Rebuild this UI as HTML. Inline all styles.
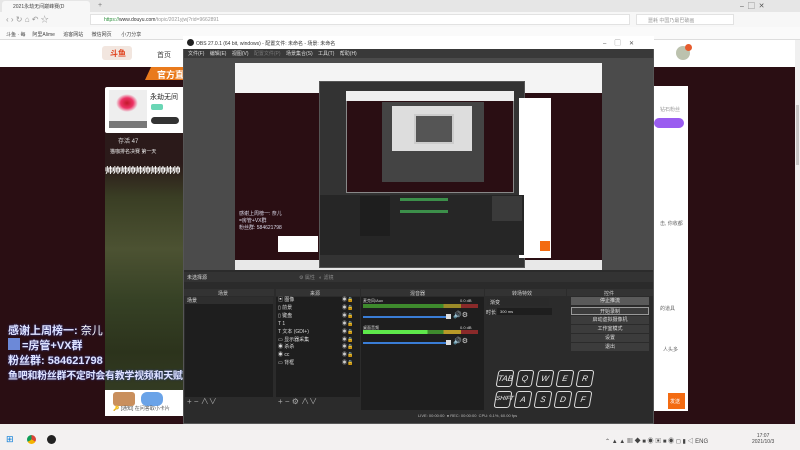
<!DOCTYPE html>
<html><head><meta charset="utf-8"><style>
*{margin:0;padding:0;box-sizing:border-box}
body{width:800px;height:450px;overflow:hidden;position:relative;background:#2a0e13;font-family:"Liberation Sans","Noto Sans CJK SC",sans-serif;font-size:5px;color:#333}
.a{position:absolute}
.t{white-space:nowrap}
.btn{position:absolute;left:4px;right:4px;height:8px;background:#3c3c3c;color:#ddd;text-align:center;font-size:5px;line-height:8px}
.k{position:absolute;width:16px;height:17px;border:1.5px solid #ddd;border-radius:3px;background:rgba(40,40,40,.8);color:#eee;font-size:8px;font-style:italic;text-align:center;line-height:15px;transform:skewX(-10deg)}
</style></head><body>
<div class="a" style="left:0;top:0;width:800px;height:12px;background:#e6e6e6"></div>
<div class="a" style="left:2px;top:1px;width:88px;height:11px;background:#f7f7f7;border-radius:3px 3px 0 0"></div>
<div class="a t" style="left:13px;top:3px;font-size:5px;color:#444">2021永劫无间巅峰赛(D</div>
<div class="a t" style="left:98px;top:2px;font-size:7px;color:#777">+</div>
<div class="a t" style="left:740px;top:1px;font-size:7px;color:#555">–&nbsp;&nbsp;▢&nbsp;&nbsp;✕</div>
<div class="a" style="left:0;top:12px;width:800px;height:15px;background:#f7f7f7"></div>
<div class="a t" style="left:6px;top:14px;font-size:8px;color:#999">‹ › ↻ ⌂ ↶ ☆</div>
<div class="a" style="left:90px;top:14px;width:540px;height:11px;background:#fff;border:1px solid #e2e2e2"></div>
<div class="a t" style="left:104px;top:17px;font-size:5px;color:#2b8f3b">https://<span style="color:#333">www.douyu.com</span><span style="color:#999">/topic/2021yjwj?rid=9662891</span></div>
<div class="a" style="left:636px;top:14px;width:98px;height:11px;background:#fff;border:1px solid #e2e2e2"></div>
<div class="a t" style="left:648px;top:17px;font-size:5px;color:#999">噩耗 中国乃最巴破画</div>
<div class="a" style="left:0;top:27px;width:800px;height:13px;background:#fafafa;border-bottom:1px solid #ddd"></div>
<div class="a t" style="left:6px;top:31px;font-size:5px;color:#444">斗鱼 · 每&nbsp;&nbsp;&nbsp;&nbsp;&nbsp;阿里Alime&nbsp;&nbsp;&nbsp;&nbsp;&nbsp;&nbsp;追客网站&nbsp;&nbsp;&nbsp;&nbsp;&nbsp;&nbsp;微信网页&nbsp;&nbsp;&nbsp;&nbsp;&nbsp;&nbsp;&nbsp;小刀分享</div>
<div class="a" style="left:0;top:40px;width:800px;height:27px;background:#fff"></div>
<div class="a" style="left:102px;top:46px;width:30px;height:14px;background:#f2e6df;border-radius:3px"></div>
<div class="a t" style="left:110px;top:48px;font-size:8px;color:#e0401a;font-weight:bold">斗鱼</div>
<div class="a t" style="left:157px;top:50px;font-size:7px;color:#444">首页</div>
<div class="a" style="left:676px;top:46px;width:14px;height:14px;border-radius:50%;background:#bcc2ae"></div>
<div class="a" style="left:685px;top:44px;width:7px;height:7px;border-radius:50%;background:#e65b2d"></div>
<div class="a" style="left:795px;top:40px;width:5px;height:390px;background:#f0f0f0"></div>
<div class="a" style="left:796px;top:105px;width:3px;height:60px;background:#c8c8c8"></div>
<div class="a" style="left:145px;top:67px;width:40px;height:13px;background:#e97a1c;clip-path:polygon(15% 0,100% 0,100% 100%,0 100%)"></div>
<div class="a t" style="left:157px;top:68px;font-size:9px;color:#fff;font-weight:bold">官方直</div>
<div class="a" style="left:105px;top:87px;width:80px;height:46px;background:#fff;border-radius:2px"></div>
<div class="a" style="left:109px;top:90px;width:38px;height:38px;background:#eee"></div>
<div class="a" style="left:116px;top:94px;width:22px;height:18px;border-radius:50%;background:radial-gradient(#c2182a,#e36 40%,#eee 70%)"></div>
<div class="a" style="left:109px;top:121px;width:38px;height:7px;background:#777"></div>
<div class="a t" style="left:150px;top:92px;font-size:7px;color:#222">永劫无间</div>
<div class="a" style="left:151px;top:104px;width:12px;height:6px;background:#6ad6b5;border-radius:2px"></div>
<div class="a" style="left:151px;top:117px;width:28px;height:7px;background:#333;border-radius:4px"></div>
<div class="a" style="left:105px;top:133px;width:80px;height:258px;background:linear-gradient(#2b1a1a 0,#2b1a1a 12%,#3a3e24 25%,#4c5232 45%,#364125 65%,#2c331c 85%,#333b22)"></div>
<div class="a t" style="left:118px;top:136px;font-size:6px;color:#ddd">存活 47</div>
<div class="a t" style="left:110px;top:148px;font-size:5px;color:#eee">猫咖排名决赛 第一天</div>
<div class="a" style="left:105px;top:165px;width:78px;height:10px;overflow:hidden"><div class="t" style="font-size:8px;color:#fff;font-weight:bold;letter-spacing:-0.5px">帅帅帅帅帅帅帅帅帅帅</div></div>
<div class="a" style="left:105px;top:390px;width:80px;height:26px;background:#fff"></div>
<div class="a" style="left:113px;top:392px;width:22px;height:14px;background:#c98f5d;border-radius:3px"></div>
<div class="a" style="left:141px;top:392px;width:22px;height:14px;background:#6aa3e8;border-radius:6px"></div>
<div class="a t" style="left:113px;top:405px;font-size:5px;color:#555">🔑 [通知] 在问答取小卡片</div>
<div class="a t" style="left:8px;top:322px;font-size:11px;color:#dfe3ff;font-weight:bold;text-shadow:0 0 2px #3040a0">感谢上周榜一: <span style="color:#fff;font-weight:normal">奈儿</span></div>
<div class="a" style="left:8px;top:338px;width:12px;height:12px;background:#6c89d8"></div>
<div class="a t" style="left:22px;top:337px;font-size:11px;color:#dfe3ff;font-weight:bold;text-shadow:0 0 2px #3040a0">=房管+VX群</div>
<div class="a t" style="left:8px;top:352px;font-size:11px;color:#dfe3ff;font-weight:bold;text-shadow:0 0 2px #3040a0">粉丝群: 584621798</div>
<div class="a t" style="left:8px;top:367px;font-size:10px;color:#dfe3ff;font-weight:bold;letter-spacing:-0.3px;text-shadow:0 0 2px #3040a0">鱼吧和粉丝群不定时会有教学视频和天赋</div>
<div class="a" style="left:654px;top:86px;width:34px;height:325px;background:#fff"></div>
<div class="a" style="left:654px;top:118px;width:30px;height:10px;background:#9a5cf0;border-radius:5px"></div>
<div class="a t" style="left:660px;top:106px;font-size:5px;color:#999">钻石粉丝</div>
<div class="a t" style="left:660px;top:220px;font-size:5px;color:#666">击, 你收都</div>
<div class="a t" style="left:660px;top:305px;font-size:5px;color:#666">的道具</div>
<div class="a t" style="left:663px;top:346px;font-size:5px;color:#666">人头多</div>
<div class="a" style="left:668px;top:393px;width:17px;height:16px;background:#f36b12"></div>
<div class="a t" style="left:670px;top:398px;font-size:5px;color:#fff">发送</div>
<div class="a" style="left:183px;top:36px;width:471px;height:388px;background:#2b2b2b;border:1px solid #555"></div>
<div class="a" style="left:183px;top:36px;width:471px;height:13px;background:#fff"></div>
<div class="a" style="left:187px;top:39px;width:7px;height:7px;border-radius:50%;background:#222"></div>
<div class="a t" style="left:196px;top:40px;font-size:5px;color:#333">OBS 27.0.1 (64 bit, windows) - 配置文件: 未命名 - 场景: 未命名</div>
<div class="a t" style="left:603px;top:38px;font-size:6px;color:#555">–&nbsp;&nbsp;&nbsp;&nbsp;&nbsp;▢&nbsp;&nbsp;&nbsp;&nbsp;&nbsp;✕</div>
<div class="a" style="left:184px;top:49px;width:469px;height:9px;background:#393939"></div>
<div class="a t" style="left:188px;top:50px;font-size:5px;color:#ddd;word-spacing:4px">文件(F) 编辑(E) 视图(V) <span style="color:#777">配置文件(P)</span> 场景集合(S) 工具(T) 帮助(H)</div>
<div class="a" style="left:184px;top:58px;width:469px;height:212px;background:#4b4b4b"></div>
<div class="a" style="left:235px;top:63px;width:367px;height:207px;background:#2a0e13"></div>
<div class="a" style="left:235px;top:63px;width:367px;height:30px;background:#f4f4f4"></div>
<div class="a" style="left:235px;top:260px;width:367px;height:10px;background:#e8e8e8"></div>
<div class="a" style="left:338px;top:82px;width:15px;height:5px;background:#e97a1c"></div>
<div class="a" style="left:338px;top:102px;width:40px;height:22px;background:#fff"></div>
<div class="a" style="left:338px;top:124px;width:40px;height:114px;background:linear-gradient(#3d3a22,#4a5030,#2e3620)"></div>
<div class="a t" style="left:239px;top:210px;font-size:5px;color:#dde">感谢上周榜一: 奈儿<br>=房管+VX群<br>粉丝群: 584621798</div>
<div class="a" style="left:278px;top:236px;width:40px;height:16px;background:#fff"></div>
<div class="a" style="left:319px;top:81px;width:206px;height:187px;background:#333;border:1px solid #555"></div>
<div class="a" style="left:519px;top:98px;width:32px;height:160px;background:#fff"></div>
<div class="a" style="left:540px;top:241px;width:10px;height:10px;background:#f36b12"></div>
<div class="a" style="left:346px;top:91px;width:168px;height:102px;background:#2a0e13;border:1px solid #888"></div>
<div class="a" style="left:346px;top:91px;width:168px;height:10px;background:#eee"></div>
<div class="a" style="left:382px;top:102px;width:102px;height:80px;background:#444"></div>
<div class="a" style="left:392px;top:106px;width:80px;height:45px;background:#ddd"></div>
<div class="a" style="left:414px;top:114px;width:40px;height:30px;background:#555;border:2px solid #ccc"></div>
<div class="a" style="left:320px;top:195px;width:204px;height:60px;background:#262626"></div>
<div class="a" style="left:360px;top:196px;width:30px;height:40px;background:#1e1e1e"></div>
<div class="a" style="left:400px;top:198px;width:48px;height:3px;background:#3c8f4a"></div>
<div class="a" style="left:400px;top:210px;width:48px;height:3px;background:#3c8f4a"></div>
<div class="a" style="left:492px;top:196px;width:30px;height:25px;background:#3a3a3a"></div>
<div class="a" style="left:184px;top:272px;width:469px;height:10px;background:#333"></div>
<div class="a t" style="left:187px;top:274px;font-size:5px;color:#ddd">未选择源</div>
<div class="a t" style="left:299px;top:274px;font-size:5px;color:#888">⚙ 属性&nbsp;&nbsp;&nbsp;◐ 滤镜</div>
<div class="a" style="left:184px;top:289px;width:90px;height:7px;background:#333"></div>
<div class="a t" style="left:218px;top:290px;font-size:5px;color:#ccc">场景</div>
<div class="a" style="left:185px;top:297px;width:88px;height:7px;background:#2e2e2e"></div>
<div class="a t" style="left:187px;top:297px;font-size:5px;color:#ddd">场景</div>
<div class="a" style="left:185px;top:304px;width:88px;height:93px;background:#1e1e1e"></div>
<div class="a t" style="left:187px;top:396px;font-size:8px;color:#aaa">+ − ∧∨</div>
<div class="a" style="left:276px;top:289px;width:84px;height:7px;background:#333"></div>
<div class="a t" style="left:310px;top:290px;font-size:5px;color:#ccc">来源</div>
<div class="a" style="left:276px;top:297px;width:84px;height:100px;background:#1e1e1e"></div>
<div class="a t" style="left:278px;top:297px;font-size:5px;line-height:7.9px;color:#ddd">▣ 图像<br>▯ 前景<br>▯ 键盘<br>T 1<br>T 文本 (GDI+)<br>▭ 显示器采集<br>◉ 杀杀<br>◉ cc<br>▭ 背框</div>
<div class="a t" style="left:342px;top:297px;font-size:5px;line-height:7.9px;color:#ccc">◉🔒<br>◉🔒<br>◉🔒<br>◉🔒<br>◉🔒<br>◉🔒<br>◉🔒<br>◉🔒<br>◉🔒</div>
<div class="a t" style="left:278px;top:396px;font-size:8px;color:#aaa">+ − ⚙ ∧∨</div>
<div class="a" style="left:361px;top:289px;width:123px;height:7px;background:#333"></div>
<div class="a t" style="left:410px;top:290px;font-size:5px;color:#ccc">混音器</div>
<div class="a" style="left:361px;top:297px;width:123px;height:121px;background:#1e1e1e"></div>
<div class="a t" style="left:363px;top:298px;font-size:4px;color:#ddd">麦克风/Aux</div>
<div class="a t" style="left:460px;top:298px;font-size:4px;color:#ddd">0.0 dB</div>
<div class="a" style="left:363px;top:304px;width:115px;height:4px;background:linear-gradient(90deg,#3e8a2d 0 70%,#9a8a28 70% 85%,#8a2a2a 85%)"></div>
<div class="a" style="left:363px;top:316px;width:85px;height:2px;background:#3a7dd6"></div>
<div class="a" style="left:446px;top:314px;width:5px;height:5px;background:#ddd"></div>
<div class="a t" style="left:453px;top:311px;font-size:7px;color:#ddd">🔊⚙</div>
<div class="a t" style="left:363px;top:325px;font-size:4px;color:#ddd">桌面音频</div>
<div class="a t" style="left:460px;top:325px;font-size:4px;color:#ddd">0.0 dB</div>
<div class="a" style="left:363px;top:330px;width:115px;height:4px;background:linear-gradient(90deg,#5ee84b 0 56%,#3e8a2d 56% 70%,#b89a28 70% 85%,#8a2a2a 85%)"></div>
<div class="a" style="left:363px;top:342px;width:85px;height:2px;background:#3a7dd6"></div>
<div class="a" style="left:446px;top:340px;width:5px;height:5px;background:#ddd"></div>
<div class="a t" style="left:453px;top:337px;font-size:7px;color:#ddd">🔊⚙</div>
<div class="a" style="left:485px;top:289px;width:81px;height:7px;background:#333"></div>
<div class="a t" style="left:512px;top:290px;font-size:5px;color:#ccc">转场特效</div>
<div class="a" style="left:487px;top:298px;width:62px;height:8px;background:#2a2a2a"></div>
<div class="a t" style="left:490px;top:299px;font-size:5px;color:#ddd">渐变</div>
<div class="a t" style="left:486px;top:309px;font-size:5px;color:#ddd">时长</div>
<div class="a" style="left:497px;top:308px;width:55px;height:7px;background:#1e1e1e"></div>
<div class="a t" style="left:500px;top:309px;font-size:4px;color:#ddd">300 ms</div>
<div class="a" style="left:567px;top:289px;width:86px;height:7px;background:#333"></div>
<div class="a t" style="left:604px;top:290px;font-size:5px;color:#ccc">控件</div>
<div class="a" style="left:567px;top:297px;width:86px;height:60px">
<div class="btn" style="top:0;background:#5a5a5a">停止推流</div>
<div class="btn" style="top:10px;border:1px solid #999">开始录制</div>
<div class="btn" style="top:19px">启动虚拟摄像机</div>
<div class="btn" style="top:28px">工作室模式</div>
<div class="btn" style="top:37px">设置</div>
<div class="btn" style="top:46px">退出</div>
</div>
<div class="a" style="left:184px;top:410px;width:469px;height:13px;background:#2b2b2b"></div>
<div class="a t" style="left:418px;top:413px;font-size:4px;color:#bbb">LIVE: 00:00:00 &nbsp;● REC: 00:00:00 &nbsp;CPU: 6.1%, 60.00 fps</div>
<div class="k" style="left:497px;top:370px">TAB</div>
<div class="k" style="left:517px;top:370px">Q</div>
<div class="k" style="left:537px;top:370px">W</div>
<div class="k" style="left:557px;top:370px">E</div>
<div class="k" style="left:577px;top:370px">R</div>
<div class="k" style="left:495px;top:391px;font-size:6px">SHIFT</div>
<div class="k" style="left:515px;top:391px">A</div>
<div class="k" style="left:535px;top:391px">S</div>
<div class="k" style="left:555px;top:391px">D</div>
<div class="k" style="left:575px;top:391px">F</div>
<div class="a" style="left:0;top:424px;width:800px;height:6px;background:#f0eeec"></div>
<div class="a" style="left:0;top:430px;width:800px;height:20px;background:#f3f1f1"></div>
<div class="a t" style="left:6px;top:434px;font-size:9px;color:#0078d7">⊞</div>
<div class="a" style="left:27px;top:435px;width:9px;height:9px;border-radius:50%;background:conic-gradient(#db4437 0 33%,#f4b400 0 66%,#0f9d58 0)"></div>
<div class="a" style="left:47px;top:435px;width:9px;height:9px;border-radius:50%;background:#222"></div>
<div class="a t" style="left:605px;top:436px;font-size:6px;color:#444">⌃ ▲ ▲ ▦ ◆ ■ ◉ ▣ ■ ◉ ◻ ▮ ◁ ENG</div>
<div class="a t" style="left:752px;top:433px;font-size:5px;color:#444;text-align:center">17:07<br>2021/10/3</div>
</body></html>
